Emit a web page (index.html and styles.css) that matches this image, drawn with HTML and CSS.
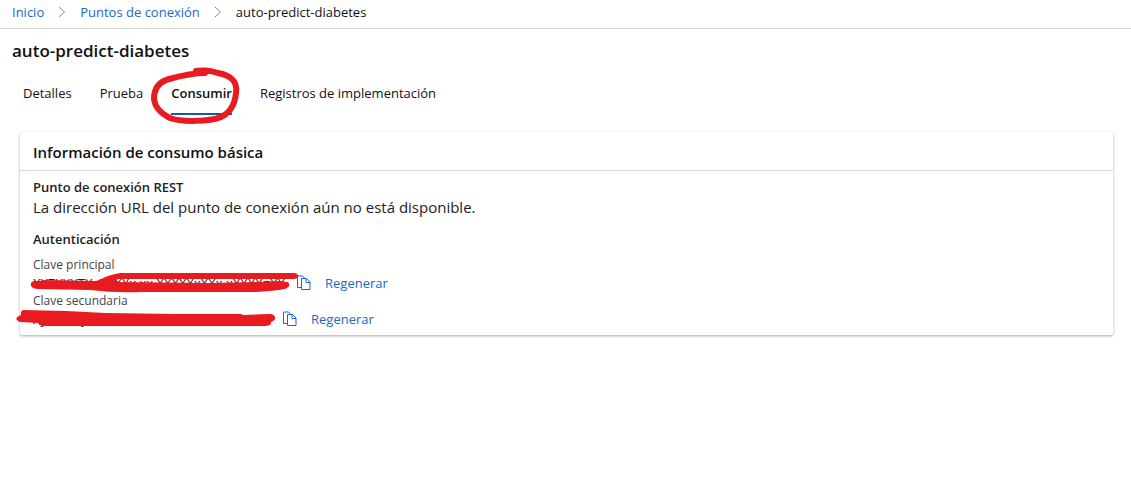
FILE: index.html
```html
<!DOCTYPE html>
<html lang="es">
<head>
<meta charset="utf-8">
<meta name="viewport" content="width=device-width, initial-scale=1">
<title>auto-predict-diabetes</title>
<link rel="stylesheet" href="styles.css">
</head>
<body>
<nav class="breadcrumb" aria-label="Ruta">
  <a href="#">Inicio</a>
  <svg class="chevron" viewBox="0 0 8 12" aria-hidden="true"><path d="M1 1l5.500 5L1 11"/></svg>
  <a href="#">Puntos de conexión</a>
  <svg class="chevron" viewBox="0 0 8 12" aria-hidden="true"><path d="M1 1l5.500 5L1 11"/></svg>
  <span>auto-predict-diabetes</span>
</nav>
<main>
  <h1 class="title">auto-predict-diabetes</h1>
  <div class="tabs" role="tablist">
    <button class="tab" role="tab" aria-selected="false">Detalles</button>
    <button class="tab" role="tab" aria-selected="false">Prueba</button>
    <button class="tab active" role="tab" aria-selected="true">Consumir
      <svg class="circle-mark" viewBox="0 0 92 58" aria-hidden="true"><path d="M55 6C42 6 30 9 19 12C8 15 4 23 4 32C5 41 12 47 20 51C30 55 60 55 71 50C82 45 85 36 86 26C88 14 80 8 68 6C60 3 50 3 46 4"/></svg>
    </button>
    <button class="tab" role="tab" aria-selected="false">Registros de implementación</button>
  </div>
  <section class="card">
    <h2 class="card-title">Información de consumo básica</h2>
    <div class="card-body">
      <h3 class="subtitle">Punto de conexión REST</h3>
      <p class="message">La dirección URL del punto de conexión aún no está disponible.</p>
      <h3 class="subtitle auth">Autenticación</h3>
      <div class="label">Clave principal</div>
      <div class="key-row">
        <span class="key first">XYZXXXTXxXXXXx xx XXXXXxXXx xXXXXgXX
          <svg class="scribble" viewBox="0 0 284 22" aria-hidden="true"><path d="M15 7Q12 7 11 8L4 8Q0 9 1 13Q3 16 8 16L60 17Q85 20 110 19L225 19Q244 18 255 16L257 15Q261 13 258 9L250 8L225 9L180 10L90 9Q82 7 90 6L264 6Q269 5 268 2Q267 0 264 0L90 0Q78 2 69 7L66 8Z"/></svg>
        </span>
        <button class="copy" aria-label="Copiar clave principal"><svg viewBox="0 0 14 16" aria-hidden="true"><path d="M4.500 12.500h-4V1h5l2 2M4.500 3.500h5l3.500 3.500v7.500H4.500zM9 3.500V7.500h4"/></svg></button>
        <button class="link">Regenerar</button>
      </div>
      <div class="label">Clave secundaria</div>
      <div class="key-row">
        <span class="key second">XyxxxxxyxxxxxxxxxxxxxxxxxxxxxxxX
          <svg class="scribble" viewBox="0 0 260 20" aria-hidden="true"><path d="M7 0Q4 1 5 5L3 6Q-1 8 1 10Q2 12 5 12L22 13Q23 16 28 16L250 16Q256 15 255 12Q260 10 259 7Q258 4 254 4L227 5L225 4L160 4L90 3L50 1Z"/></svg>
        </span>
        <button class="copy" aria-label="Copiar clave secundaria"><svg viewBox="0 0 14 16" aria-hidden="true"><path d="M4.500 12.500h-4V1h5l2 2M4.500 3.500h5l3.500 3.500v7.500H4.500zM9 3.500V7.500h4"/></svg></button>
        <button class="link">Regenerar</button>
      </div>
    </div>
  </section>
</main>
</body>
</html>
```
FILE: styles.css
```css
* { box-sizing: border-box; }
body {
  margin: 0;
  background: #fff;
  color: #111;
  font: 13px/18px "Open Sans", "Noto Sans", sans-serif;
}
h1, h2, h3, p { margin: 0; }
main { padding-bottom: 24px; }
button {
  padding: 0;
  border: 0;
  background: none;
  color: inherit;
  font: inherit;
  cursor: pointer;
}
a, .link { color: #2266c8; text-decoration: none; }
.breadcrumb {
  display: flex;
  align-items: center;
  gap: 14px;
  padding: 3px 12px 7px;
  border-bottom: 1px solid #d6d6d6;
}
.chevron { width: 8px; height: 12px; fill: none; stroke: #888; }
.title {
  padding: 11px 12px;
  font-size: 17px;
  line-height: 22px;
  font-weight: 600;
}
.tabs { display: flex; gap: 28px; padding: 0 23px; }
.tab { position: relative; padding: 11px 0; border-bottom: 2px solid transparent; }
.active { border-color: #1c57a5; font-weight: 600; }
.circle-mark {
  position: absolute;
  top: -6px;
  left: -21px;
  width: 92px;
  height: 58px;
  fill: none;
  stroke: #e81c20;
  stroke-width: 6;
  stroke-linecap: round;
  stroke-linejoin: round;
  pointer-events: none;
}
.card {
  margin: 17px 18px 0 20px;
  border-radius: 2px;
  box-shadow: 0 1px 3px rgba(0, 0, 0, .35);
}
.card-title {
  padding: 9px 13px 7px;
  border-bottom: 1px solid #d6d6d6;
  font-size: 15px;
  line-height: 22px;
  font-weight: 600;
}
.card-body { padding: 7px 13px; color: #222; }
.subtitle { font-size: 13px; line-height: 18px; font-weight: 600; }
.message { font-size: 15px; line-height: 22px; }
.auth { margin: 12px 0 8px; }
.label { font-size: 12px; line-height: 18px; color: #444; }
.key-row { display: flex; align-items: center; height: 18px; }
.key { position: relative; height: 18px; margin-right: 7px; white-space: nowrap; }
.first { width: 257px; }
.second { width: 243px; }
.scribble { position: absolute; fill: #e81c20; pointer-events: none; }
.first .scribble { top: -1px; left: -3px; width: 284px; height: 22px; }
.second .scribble { top: 0; left: -17px; width: 260px; height: 20px; }
.copy { width: 14px; height: 16px; margin-right: 14px; }
.copy svg { display: block; width: 14px; height: 16px; fill: none; stroke: #2266c8; }
```
